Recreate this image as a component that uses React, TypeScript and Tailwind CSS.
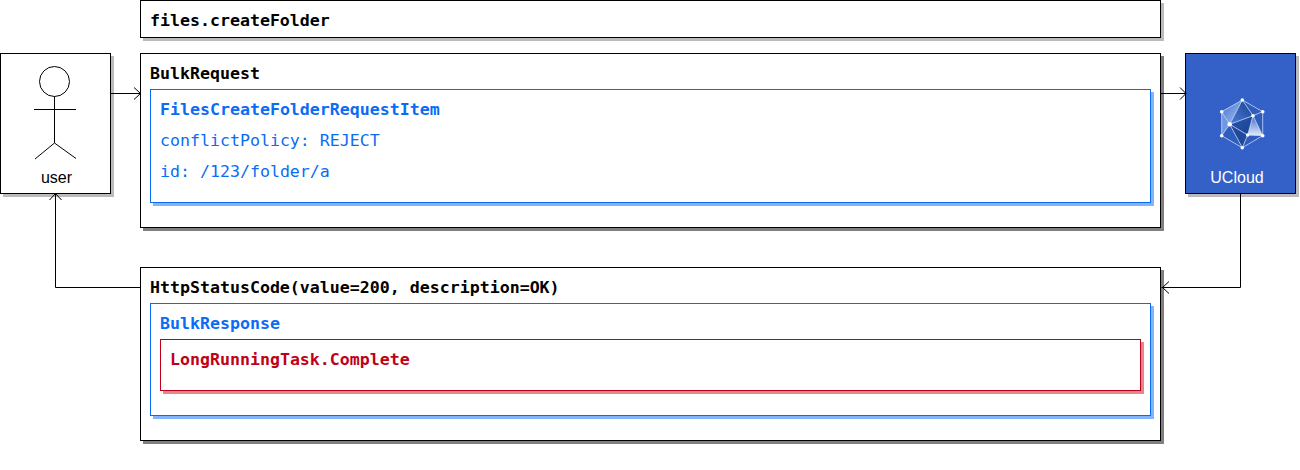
const mono = "font-['DejaVu_Sans_Mono','Liberation_Mono',monospace] text-[16.6px] leading-[31px] whitespace-pre";

function Connectors() {
  return (
    <svg className="absolute left-0 top-0 z-10" width="1300" height="470" fill="none" stroke="#000" strokeWidth="1">
      <path d="M110.500 93.500H140M134 87.500l6.500 6-6.500 6" />
      <path d="M1160.500 93.500H1185M1180 87.500l6 6-6 6" />
      <path d="M140.500 287.500H55.500V193.500M49.500 200l6-6.500 6 6.500" />
      <path d="M1240.500 193.500V287.500H1161.500M1169 281.500l-6.500 6 6.500 6" />
      <circle cx="54.500" cy="81.500" r="15" />
      <path d="M54.500 96.500V143M34 109.500H76M35 159l19.500-16L76 158.500" />
    </svg>
  );
}

function Logo() {
  const a: [number, number] = [41.3, 15];
  const b: [number, number] = [61.7, 26.7];
  const c: [number, number] = [61.7, 50.7];
  const d: [number, number] = [41.3, 62.7];
  const e: [number, number] = [20.7, 50.7];
  const f: [number, number] = [20.7, 26.7];
  const p: [number, number] = [28.7, 39.3];
  const q: [number, number] = [52, 30.7];
  const r: [number, number] = [46.7, 50];
  const edges = [
    [a, b], [b, c], [c, d], [d, e], [e, f], [f, a],
    [a, p], [a, q], [q, b], [p, q], [p, f], [p, e],
    [p, d], [p, r], [r, c], [r, d], [q, r], [q, c],
  ];
  return (
    <svg width="80" height="80" viewBox="0 0 80 80">
      <defs>
        <linearGradient id="lg1" x1="0" y1="0" x2="1" y2="1">
          <stop offset="0" stopColor="#3f6fcc" />
          <stop offset="1" stopColor="#a9c4f2" />
        </linearGradient>
        <linearGradient id="lg2" x1="1" y1="0" x2="0" y2="1">
          <stop offset="0" stopColor="#173f8e" />
          <stop offset="1" stopColor="#4c7fd8" />
        </linearGradient>
        <linearGradient id="lg3" x1="0" y1="0" x2="0" y2="1">
          <stop offset="0" stopColor="#3c6ccb" />
          <stop offset="1" stopColor="#e3ecfb" />
        </linearGradient>
        <linearGradient id="lg4" x1="0" y1="0" x2="1" y2="1">
          <stop offset="0" stopColor="#2a58b2" />
          <stop offset="1" stopColor="#173f8e" />
        </linearGradient>
      </defs>
      <polygon points={[a, b, c, d, e, f].join(" ")} fill="#2f5dbd" />
      <polygon points={[f, a, p].join(" ")} fill="url(#lg1)" />
      <polygon points={[f, p, e].join(" ")} fill="#6f97e2" />
      <polygon points={[a, q, p].join(" ")} fill="url(#lg2)" />
      <polygon points={[p, q, r].join(" ")} fill="url(#lg4)" />
      <polygon points={[p, r, d].join(" ")} fill="#1f4a9c" />
      <polygon points={[q, c, r].join(" ")} fill="url(#lg3)" />
      {edges.map(([s, t], i) => (
        <line key={i} x1={s[0]} y1={s[1]} x2={t[0]} y2={t[1]} stroke="#c9d9f6" strokeWidth="0.8" />
      ))}
      {[a, b, c, d, e, f, q, r].map((n, i) => (
        <circle key={i} cx={n[0]} cy={n[1]} r="1.8" fill="#fff" />
      ))}
      <circle cx={p[0]} cy={p[1]} r="2.3" fill="#fff" />
    </svg>
  );
}

export default function App() {
  return (
    <div className="relative flex h-[470px] w-[1300px] overflow-hidden bg-white text-black">
      <Connectors />

      {/* actor */}
      <div className="mt-[53px] flex h-[141px] w-[111px] flex-col items-center justify-end border border-black bg-white pb-[3px] pl-[2px] font-['Liberation_Sans',Arial,sans-serif] text-[16px] leading-[24px] shadow-[3px_3px_0_#bbb]">
        user
      </div>

      <div className="ml-[29px] flex w-[1021px] flex-col">
        <div className={`h-[38px] border border-black bg-white pl-[9px] pt-[4px] font-bold shadow-[3px_3px_0_#bbb] ${mono}`}>
          files.createFolder
        </div>

        {/* request */}
        <div className="mt-[15px] h-[175px] border border-black bg-white px-[9px] pt-[4px] shadow-[3px_3px_0_#808080]">
          <div className={`h-[31px] font-bold ${mono}`}>BulkRequest</div>
          <div className="h-[114px] border border-[#0a6cf5] bg-white pl-[9px] pt-[4px] text-[#0a6cf5] shadow-[3px_3px_0_#84b5fa]">
            <div className={`font-bold ${mono}`}>FilesCreateFolderRequestItem</div>
            <div className={mono}>conflictPolicy: REJECT</div>
            <div className={mono}>id: /123/folder/a</div>
          </div>
        </div>

        {/* response */}
        <div className="mt-[39px] h-[174px] border border-black bg-white px-[9px] pt-[4px] shadow-[3px_3px_0_#808080]">
          <div className={`h-[31px] font-bold ${mono}`}>HttpStatusCode(value=200, description=OK)</div>
          <div className="h-[113px] border border-[#0a6cf5] bg-white px-[9px] pt-[4px] text-[#0a6cf5] shadow-[3px_3px_0_#84b5fa]">
            <div className={`font-bold ${mono}`}>BulkResponse</div>
            <div className="h-[52px] border border-[#c00018] bg-white pl-[9px] pt-[4px] text-[#c00018] shadow-[3px_3px_0_#e08890]">
              <div className={`font-bold ${mono}`}>LongRunningTask.Complete</div>
            </div>
          </div>
        </div>
      </div>

      {/* ucloud */}
      <div className="ml-[24px] mt-[53px] flex h-[141px] w-[111px] flex-col items-center border border-black bg-[#3361c8] text-white shadow-[3px_3px_0_#bbb]">
        <div className="mt-[31px] h-[80px]">
          <Logo />
        </div>
        <div className="mr-[7px] mt-[1px] font-['Liberation_Sans',Arial,sans-serif] text-[16px] leading-[24px]">UCloud</div>
      </div>
    </div>
  );
}
